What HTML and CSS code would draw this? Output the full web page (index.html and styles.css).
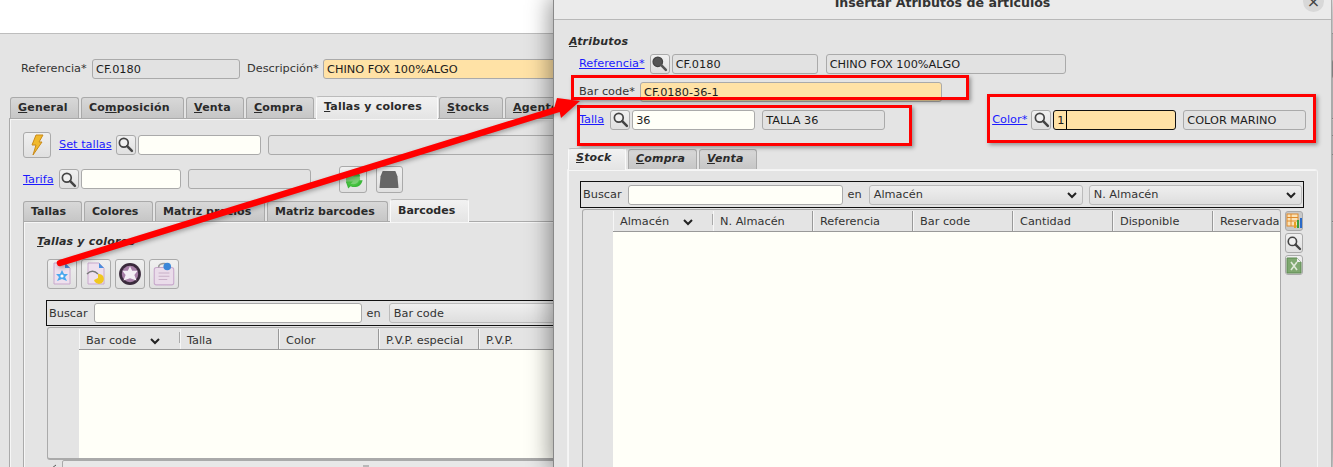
FILE: index.html
```html
<!DOCTYPE html>
<html lang="es">
<head>
  <meta charset="UTF-8">
  <link rel="stylesheet" href="styles.css">
  <title>Insertar Atributos de artículos</title>
</head>
<body>
  <svg class="defs" width="0" height="0">
    <symbol id="lupa" viewBox="0 0 20 20">
      <circle cx="8" cy="8" r="5.2" fill="#f0f0f0" stroke="#444" stroke-width="2"/>
      <line x1="12" y1="12" x2="17.5" y2="17.5" stroke="#444" stroke-width="3" stroke-linecap="round"/>
    </symbol>
    <symbol id="lupa-dark" viewBox="0 0 20 20">
      <circle cx="8" cy="8" r="5.6" fill="#555" stroke="#444" stroke-width="1.5"/>
      <line x1="12" y1="12" x2="17.5" y2="17.5" stroke="#555" stroke-width="3" stroke-linecap="round"/>
    </symbol>
    <symbol id="chevron" viewBox="0 0 10 8">
      <path d="M1 2 L5 6 L9 2" fill="none" stroke="#222" stroke-width="2"/>
    </symbol>
  </svg>

  <div class="desktop">

    <!-- ventana de atras -->
    <div class="back">
      <div class="back-title"></div>
      <div class="ref-row">
        <span class="lbl lbl-ref">Referencia*</span>
        <div class="field off w-148">CF.0180</div>
        <span class="lbl lbl-desc">Descripción*</span>
        <div class="field req grow">CHINO FOX 100%ALGO</div>
      </div>

      <div class="tabs tabs-main">
        <div class="tab t-general"><u>G</u>eneral</div>
        <div class="tab t-compo">Co<u>m</u>posición</div>
        <div class="tab t-venta"><u>V</u>enta</div>
        <div class="tab t-compra"><u>C</u>ompra</div>
        <div class="tab active t-tallas"><u>T</u>allas y colores</div>
        <div class="tab t-stocks"><u>S</u>tocks</div>
        <div class="tab t-agentes"><u>A</u>gentes</div>
      </div>
      <div class="panel panel-main">
        <div class="row set-row">
          <div class="btn btn-flash">
            <svg width="14" height="22" viewBox="0 0 14 22"><path d="M6 1 L13 1 L9 8 L12 8 L3 21 L6 11 L2 11 Z" fill="#f0b92c" stroke="#c98a1a" stroke-width="1"/></svg>
          </div>
          <a class="link link-set" href="#">Set tallas</a>
          <div class="btn-s"><svg width="17" height="17"><use href="#lupa"/></svg></div>
          <div class="field w-123">&nbsp;</div>
          <div class="field off grow gap-7">&nbsp;</div>
        </div>
        <div class="row tarifa-row">
          <a class="link" href="#">Tarifa</a>
          <div class="btn-s"><svg width="17" height="17"><use href="#lupa"/></svg></div>
          <div class="field w-100">&nbsp;</div>
          <div class="field off w-123 gap-7">&nbsp;</div>
          <div class="btn btn-green">
            <svg width="24" height="24" viewBox="0 0 20 20"><path d="M2 9 C3 4 8 2 12 4 L14 2 L16 8 L10 8 L12 6 C9 5 6 6 5 9 Z M18 11 C17 16 12 18 8 16 L6 18 L4 12 L10 12 L8 14 C11 15 14 14 15 11 Z" fill="#3cb83a"/><circle cx="10" cy="10" r="6" fill="#4cc843" opacity=".7"/></svg>
          </div>
          <div class="btn btn-dark">
            <svg width="22" height="19" viewBox="0 0 20 18"><path d="M4 1 L16 1 L18 6 L19 17 L1 17 L2 6 Z" fill="#666"/></svg>
          </div>
        </div>

        <div class="tabs tabs-sub">
          <div class="tab t-s1">Tallas</div>
          <div class="tab t-s2">Colores</div>
          <div class="tab t-s3">Matriz precios</div>
          <div class="tab t-s4">Matriz barcodes</div>
          <div class="tab active t-s5">Barcodes</div>
        </div>
        <div class="panel panel-sub">
          <div class="group-title"><u>T</u>allas y colores</div>
          <div class="row tool-row">
            <div class="btn btn-tool">
              <svg width="20" height="24" viewBox="0 0 20 24"><path d="M2 1 L13 1 L18 6 L18 22 L2 22 Z" fill="#eee0ee" stroke="#c8a8cc"/><path d="M13 1 L18 6 L13 6 Z" fill="#4a8fe0"/><path d="M10 8 L12 12 L16 12 L13 15 L15 19 L10 17 L5 19 L7 15 L4 12 L8 12 Z" fill="#4aa8ee"/><circle cx="10" cy="14" r="1.6" fill="#fff"/></svg>
            </div>
            <div class="btn btn-tool">
              <svg width="20" height="24" viewBox="0 0 20 24"><path d="M2 1 L13 1 L18 6 L18 22 L2 22 Z" fill="#eee0ee" stroke="#c8a8cc"/><path d="M13 1 L18 6 L13 6 Z" fill="#4a8fe0"/><path d="M1 12 C5 8 9 9 12 12" fill="none" stroke="#777" stroke-width="1.5"/><path d="M12 12 A5 5 0 1 1 8 18 L12 16 Z" fill="#f0c820"/></svg>
            </div>
            <div class="btn btn-tool">
              <svg width="24" height="24" viewBox="0 0 22 22"><circle cx="11" cy="11" r="10" fill="#3a2a3c"/><circle cx="11" cy="11" r="7.5" fill="#a880a8"/><path d="M11 4 L13 8 L18 8 L15 12 L17 17 L11 15 L5 17 L7 12 L4 8 L9 8 Z" fill="#f4eef4"/></svg>
            </div>
            <div class="btn btn-tool">
              <svg width="24" height="26" viewBox="0 0 22 24"><rect x="2" y="6" width="18" height="16" rx="2" fill="#eadcea" stroke="#c8a8cc"/><path d="M6 6 C6 1 16 1 16 6" fill="none" stroke="#999" stroke-width="1.5"/><circle cx="14" cy="5" r="3.5" fill="#3a86d8"/><path d="M6 11 H16 M6 14 H16 M6 17 H14" stroke="#c8b0c8"/></svg>
            </div>
          </div>

          <div class="search-bar search-back">
            <span class="lbl">Buscar</span>
            <div class="field w-268">&nbsp;</div>
            <span class="lbl">en</span>
            <div class="select grow">Bar code</div>
          </div>
          <div class="grid-box grid-back">
            <div class="gutter gutter-back"></div>
            <div class="grid-main">
              <div class="head head-back">
                <div class="col col-sorted">Bar code <svg class="sort" width="10" height="8"><use href="#chevron"/></svg></div>
                <div class="col">Talla</div>
                <div class="col">Color</div>
                <div class="col">P.V.P. especial</div>
                <div class="col">P.V.P.</div>
              </div>
              <div class="grid-body"></div>
            </div>
          </div>
          <div class="hscroll">
            <div class="hscroll-left"><svg width="8" height="8" viewBox="0 0 8 8"><path d="M6 1 L2 4 L6 7" fill="none" stroke="#555"/></svg></div>
            <div class="hscroll-thumb"><svg class="grip" width="7" height="6"><path d="M1 0 V6 M3 0 V6 M5 0 V6" stroke="#888"/></svg></div>
          </div>
        </div>
      </div>
    </div>

    <!-- dialogo -->
    <div class="dialog">
      <div class="dlg-title">Insertar Atributos de artículos</div>
      <div class="dlg-close">×</div>

      <div class="group-title attr-title"><u>A</u>tributos</div>
      <div class="row attr-row attr-1">
        <a class="link" href="#">Referencia*</a>
        <div class="btn-s"><svg width="17" height="17"><use href="#lupa-dark"/></svg></div>
        <div class="field off w-146">CF.0180</div>
        <div class="field off w-240 gap-8">CHINO FOX 100%ALGO</div>
      </div>
      <div class="row attr-row attr-2">
        <span class="lbl">Bar code*</span>
        <div class="field req w-302">CF.0180-36-1</div>
      </div>
      <div class="row attr-row attr-3">
        <a class="link" href="#">Talla</a>
        <div class="btn-s"><svg width="17" height="17"><use href="#lupa"/></svg></div>
        <div class="field w-123">36</div>
        <div class="field off w-123 gap-7">TALLA 36</div>
        <a class="link link-color" href="#">Color*</a>
        <div class="btn-s"><svg width="17" height="17"><use href="#lupa"/></svg></div>
        <div class="field req focus w-123"><span class="caret">1</span></div>
        <div class="field off w-123 gap-7">COLOR MARINO</div>
      </div>

      <div class="tabs tabs-dlg">
        <div class="tab active ital t-d1"><u>S</u>tock</div>
        <div class="tab ital t-d2"><u>C</u>ompra</div>
        <div class="tab ital t-d3"><u>V</u>enta</div>
      </div>
      <div class="panel panel-dlg">
        <div class="search-bar search-dlg">
          <span class="lbl">Buscar</span>
          <div class="field w-215">&nbsp;</div>
          <span class="lbl">en</span>
          <div class="select w-214">Almacén<svg width="10" height="8"><use href="#chevron"/></svg></div>
          <div class="select w-214 sel-2">N. Almacén<svg width="10" height="8"><use href="#chevron"/></svg></div>
        </div>
        <div class="grid-wrap">
          <div class="grid-box grid-dlg">
            <div class="gutter"></div>
            <div class="grid-main">
              <div class="head head-dlg">
                <div class="col col-sorted">Almacén <svg class="sort" width="10" height="8"><use href="#chevron"/></svg></div>
                <div class="col">N. Almacén</div>
                <div class="col">Referencia</div>
                <div class="col">Bar code</div>
                <div class="col">Cantidad</div>
                <div class="col">Disponible</div>
                <div class="col">Reservada</div>
              </div>
              <div class="grid-body"></div>
            </div>
          </div>
          <div class="side-tools">
            <div class="btn-side pressed">
              <svg width="16" height="16" viewBox="0 0 16 16"><rect x="1" y="1" width="11" height="12" fill="#fbe3b8" stroke="#e08a2a"/><path d="M1 4.5 H12 M1 8 H12 M5 1 V13" stroke="#e08a2a"/><rect x="8" y="9" width="2" height="6" fill="#e8a020"/><rect x="11" y="7" width="2" height="8" fill="#3aa03a"/><rect x="14" y="5" width="2" height="10" fill="#2a6ac8"/></svg>
            </div>
            <div class="btn-side"><svg width="16" height="16"><use href="#lupa"/></svg></div>
            <div class="btn-side">
              <svg width="16" height="17" viewBox="0 0 16 17"><path d="M1 1 H11 L15 5 V16 H1 Z" fill="#7fa870" stroke="#5f8a52"/><path d="M11 1 L15 5 H11 Z" fill="#eee"/><path d="M5 5 L11 13 M11 5 L5 13" stroke="#dfe8d8" stroke-width="1.6"/></svg>
            </div>
          </div>
        </div>
      </div>
    </div>

    <!-- marcas rojas -->
    <div class="mark mark-barcode"></div>
    <div class="mark mark-talla"></div>
    <div class="mark mark-color"></div>
    <svg class="arrow" width="1333" height="467" viewBox="0 0 1333 467">
      <line x1="60" y1="263" x2="562" y2="108" stroke="#f00" stroke-width="6.5" stroke-linecap="round"/>
      <polygon points="557,98 580,101 561,118 559,109 553,112" fill="#f00"/>
    </svg>
  </div>
</body>
</html>
```

FILE: styles.css
```css
* {
  box-sizing: border-box;
}
body {
  margin: 0;
  font-family: "DejaVu Sans", sans-serif;
  font-size: 11.3px;
  color: #2c2c2c;
}
.defs {
  position: absolute;
}
.desktop {
  position: relative;
  width: 1333px;
  height: 467px;
  overflow: hidden;
  background: #e4e4e4;
}
.back {
  position: absolute;
  left: 0;
  top: 0;
  width: 1333px;
  height: 467px;
  overflow: hidden;
  background: #e4e4e4;
}
.back-title {
  height: 34px;
  background: #fff;
  border-bottom: 1px solid #bdbdbd;
}

/* campos */
.lbl {
  white-space: nowrap;
  color: #333;
}
.link {
  color: #1a1aff;
  white-space: nowrap;
}
.field {
  height: 20px;
  line-height: 19px;
  padding: 0 3px;
  border: 1px solid #aaa;
  border-radius: 3px;
  background: #fffff8;
  color: #1c1c1c;
  white-space: nowrap;
  overflow: hidden;
  flex: none;
}
.field.off {
  background: #e2e2e2;
}
.field.req {
  background: #ffe2a6;
}
.field.focus {
  border-color: #111;
  border-width: 1.5px;
}
.caret {
  display: inline-block;
  border-right: 1px solid #000;
  padding-right: 1px;
}
.grow {
  flex: 1;
}
.w-100 { width: 100px; }
.w-123 { width: 123px; }
.w-146 { width: 146px; }
.w-148 { width: 148px; }
.w-214 { width: 214px; }
.w-215 { width: 215px; }
.w-240 { width: 240px; }
.w-268 { width: 268px; }
.w-302 { width: 302px; }
.gap-7 { margin-left: 7px; }
.gap-8 { margin-left: 8px; }

.row {
  display: flex;
  align-items: center;
}
.ref-row {
  display: flex;
  align-items: center;
  height: 21px;
  margin-top: 24px;
  padding-left: 21px;
}
.lbl-ref {
  width: 71px;
}
.lbl-desc {
  margin-left: 7px;
  width: 76px;
}

/* pestañas */
.tabs {
  display: flex;
  align-items: flex-end;
  gap: 2px;
}
.tab {
  flex: none;
  height: 21px;
  line-height: 20px;
  padding-left: 7px;
  font-weight: bold;
  font-size: 11px;
  letter-spacing: .2px;
  white-space: nowrap;
  overflow: hidden;
  background: linear-gradient(#d8d8d8, #c6c6c6);
  border: 1px solid #aaa;
  border-bottom: none;
  border-radius: 3px 3px 0 0;
  color: #2a2a2a;
}
.tab.active {
  height: 23px;
  background: linear-gradient(#f2f2f2, #e4e4e4);
  border-color: #fafafa;
  border-top: 1px solid #bbb;
  position: relative;
  margin-bottom: -1px;
  z-index: 1;
}
.ital {
  font-style: italic;
}
.tabs-main {
  margin-top: 16px;
  padding-left: 10px;
  height: 23px;
}
.t-general { width: 69px; }
.t-compo { width: 103px; }
.t-venta { width: 58px; }
.t-compra { width: 68px; }
.t-tallas { width: 122px; }
.t-stocks { width: 64px; margin-left: -1px; }
.t-agentes { width: 60px; }

.panel {
  border: 1px solid #aaa;
  box-shadow: inset 1px 1px 0 #f6f6f6;
}
.panel-main {
  margin-left: 9px;
  margin-right: -4px;
  padding: 12px 0 0 13px;
  height: 360px;
}
.set-row {
  height: 27px;
}
.btn, .btn-s, .btn-side {
  display: flex;
  align-items: center;
  justify-content: center;
  flex: none;
  border: 1px solid #aaa;
  border-radius: 3px;
  background: linear-gradient(#f0f0f0, #e0e0e0);
}
.btn-flash {
  width: 28px;
  height: 26px;
}
.link-set {
  margin: 0 4px 0 8px;
}
.btn-s {
  width: 20px;
  height: 20px;
  margin-right: 2px;
}
.tarifa-row {
  height: 26px;
  margin-top: 8px;
}
.tarifa-row .btn-s {
  margin-left: 5px;
}
.btn-green {
  width: 28px;
  height: 27px;
  margin-left: 28px;
}
.btn-dark {
  width: 27px;
  height: 27px;
  margin-left: 9px;
}

.tabs-sub {
  margin-top: 7px;
  height: 22px;
}
.tabs-sub .tab {
  height: 20px;
  line-height: 19px;
  letter-spacing: 0;
}
.tabs-sub .tab.active {
  height: 23px;
  line-height: 21px;
}
.t-s1 { width: 59px; }
.t-s2 { width: 69px; }
.t-s3 { width: 110px; }
.t-s4 { width: 121px; }
.t-s5 { width: 79px; }
.panel-sub {
  height: 260px;
  padding: 13px 0 0 13px;
}
.group-title {
  font-weight: bold;
  font-style: italic;
  font-size: 11px;
  letter-spacing: .2px;
  line-height: 14px;
}
.tool-row {
  gap: 4px;
  margin: 10px 0 0 10px;
}
.btn-tool {
  width: 30px;
  height: 30px;
}

/* barra de busqueda */
.search-bar {
  display: flex;
  align-items: center;
  border: 1px solid #111;
  padding: 0 2px;
}
.search-back {
  margin: 11px 0 0 9px;
  height: 26px;
  width: 1200px;
}
.search-back .field, .search-dlg .field {
  margin: 0 5px 0 6px;
}
.select {
  display: flex;
  align-items: center;
  justify-content: space-between;
  height: 20px;
  margin-left: 7px;
  padding: 0 5px 0 4px;
  border: 1px solid #bbb;
  border-radius: 3px;
  background: linear-gradient(#efefef, #dedede);
  color: #333;
  flex: none;
  white-space: nowrap;
}
.select.grow {
  flex: 1;
  margin-left: 8px;
}

/* tablas */
.grid-box {
  display: flex;
  border: 1px solid #aaa;
  border-bottom-width: 2px;
  border-radius: 3px;
  background: #e4e4e4;
}
.grid-back {
  margin: 1px 0 0 10px;
  width: 1200px;
  height: 133px;
}
.gutter {
  width: 30px;
  flex: none;
}
.gutter-back {
  width: 31px;
}
.grid-main {
  flex: 1;
  padding-top: 1px;
  display: flex;
  flex-direction: column;
  min-width: 0;
}
.head {
  display: grid;
  height: 21px;
  flex: none;
  border-bottom: 1px solid #999;
}
.head-back {
  grid-template-columns: 101px 99px 100px 100px 1fr;
}
.head-dlg {
  grid-template-columns: repeat(6, 100px) 1fr;
}
.col {
  padding: 1px 0 0 7px;
  line-height: 19px;
  color: #333;
  white-space: nowrap;
  overflow: hidden;
  border-right: 1px solid #999;
  box-shadow: inset 1px 0 0 #f6f6f6;
}
.head-back .col {
  padding-top: 2px;
}
.col:last-child {
  border-right: none;
}
.col-sorted {
  border-right: none;
  background: linear-gradient(to bottom, transparent 3px, #aaa 3px, #aaa 14px, transparent 14px) no-repeat right / 1px 100%;
}
.sort {
  margin-left: 10px;
  vertical-align: -1px;
}
.grid-body {
  flex: 1;
  background: #fffff8;
}
.hscroll {
  display: flex;
  height: 12px;
  margin-left: 10px;
  width: 1200px;
}
.hscroll-left {
  width: 15px;
  padding: 2px 0 0 3px;
  flex: none;
}
.hscroll-thumb {
  flex: 1;
  background: #e8e8e8;
  border: 1px solid #aaa;
  border-radius: 2px;
  text-align: center;
  padding-right: 577px;
}
.grip {
  display: inline-block;
}

/* dialogo */
.dialog {
  position: absolute;
  left: 553px;
  top: 0;
  width: 779px;
  height: 467px;
  background: #e4e4e4;
  border-left: 1px solid #888;
  border-right: 1px solid #aaa;
  box-shadow: 0 0 22px 3px rgba(0, 0, 0, .42);
}
.dlg-title {
  height: 20px;
  line-height: 5px;
  text-align: center;
  font-weight: bold;
  font-size: 12.6px;
  overflow: hidden;
  color: #333;
  background: #ebebeb;
  border-bottom: 1px solid #b8b8b8;
}
.dlg-close {
  position: absolute;
  left: 749px;
  top: -9px;
  width: 21px;
  height: 21px;
  border-radius: 50%;
  background: #d8d8d8;
  text-align: center;
  font-size: 16px;
  line-height: 21px;
  color: #444;
}
.attr-title {
  margin: 15px 0 0 15px;
}
.attr-row {
  padding-left: 25px;
  height: 21px;
}
.attr-1 {
  margin-top: 4px;
}
.attr-1 .link {
  margin-right: 5px;
}
.attr-2 {
  margin-top: 7px;
}
.attr-2 .lbl {
  width: 61px;
}
.attr-3 {
  margin-top: 7px;
}
.attr-3 .link {
  margin-right: 6px;
}
.attr-3 .link.link-color {
  margin: 0 4px 0 107px;
}
.tabs-dlg {
  margin-top: 17px;
  padding-left: 14px;
  height: 22px;
}
.tabs-dlg .tab {
  height: 20px;
  line-height: 18px;
}
.tabs-dlg .tab.active {
  height: 22px;
  line-height: 18px;
}
.t-d1 { width: 58px; }
.t-d2 { width: 69px; }
.t-d3 { width: 58px; }
.panel-dlg {
  margin-left: 13px;
  width: 751px;
  height: 300px;
  padding: 11px 0 0 12px;
  border-radius: 0 3px 0 0;
  border-color: #f4f4f4;
}
.search-dlg {
  width: 724px;
  height: 27px;
}
.search-dlg .sel-2 {
  width: 213px;
  margin-left: 6px;
}
.grid-wrap {
  display: flex;
  margin: 1px 0 0 2px;
}
.grid-dlg {
  width: 699px;
  height: 270px;
}
.side-tools {
  display: flex;
  flex-direction: column;
  gap: 2px;
  margin: 2px 0 0 4px;
}
.btn-side {
  width: 18px;
  height: 20px;
}
.pressed {
  background: #c8c8c8;
}

/* marcas rojas */
.mark {
  position: absolute;
  border: 3.5px solid #f00;
  box-shadow: 2px 2px 4px rgba(0, 0, 0, .35);
}
.mark-barcode {
  left: 571px;
  top: 75px;
  width: 398px;
  height: 25px;
}
.mark-talla {
  left: 577px;
  top: 105px;
  width: 335px;
  height: 41px;
}
.mark-color {
  left: 987px;
  top: 94px;
  width: 329px;
  height: 49px;
}
.arrow {
  position: absolute;
  left: 0;
  top: 0;
  filter: drop-shadow(1px 2px 2px rgba(0, 0, 0, .3));
}
```
